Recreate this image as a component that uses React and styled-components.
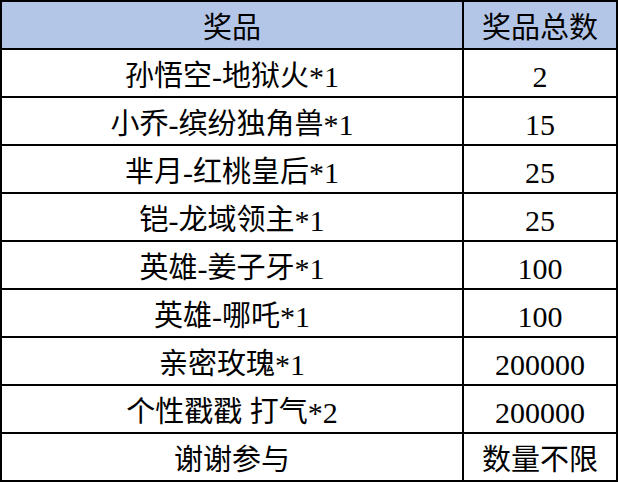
import styled, { createGlobalStyle } from "styled-components";

const GlobalStyle = createGlobalStyle`
  html, body {
    margin: 0;
    padding: 0;
    background: #ffffff;
  }
`;

const Table = styled.div`
  width: 618px;
  height: 482px;
  box-sizing: border-box;
  display: grid;
  grid-template-columns: 460px 152px;
  grid-auto-rows: 46px;
  gap: 2px;
  padding: 2px;
  background: #000000;
  font-family: "Liberation Serif", "Noto Sans CJK SC", serif;
  color: #000000;
`;

const Cell = styled.div`
  display: flex;
  align-items: center;
  justify-content: center;
  background: ${(p) => (p.$head ? "#b4c6e7" : "#ffffff")};
  font-size: 29px;
  line-height: 1;
  padding-top: 7px;
  box-sizing: border-box;
  white-space: pre;
`;

const Latin = styled.span`
  font-size: 30px;
`;

// split into CJK runs and latin runs so digits can be sized on their own
const runs = (text) =>
  text.split(/([^\u3000-\u9fff]+)/).filter(Boolean).map((part, i) =>
    /[\u3000-\u9fff]/.test(part) ? part : <Latin key={i}>{part}</Latin>
  );

const rows = [
  ["孙悟空-地狱火*1", "2"],
  ["小乔-缤纷独角兽*1", "15"],
  ["芈月-红桃皇后*1", "25"],
  ["铠-龙域领主*1", "25"],
  ["英雄-姜子牙*1", "100"],
  ["英雄-哪吒*1", "100"],
  ["亲密玫瑰*1", "200000"],
  ["个性戳戳 打气*2", "200000"],
  ["谢谢参与", "数量不限"],
];

export default function App() {
  return (
    <>
      <GlobalStyle />
      <Table>
        <Cell $head>奖品</Cell>
        <Cell $head>奖品总数</Cell>
        {rows.map(([name, count]) => [
          <Cell key={name}>{runs(name)}</Cell>,
          <Cell key={name + "n"}>{runs(count)}</Cell>,
        ])}
      </Table>
    </>
  );
}
